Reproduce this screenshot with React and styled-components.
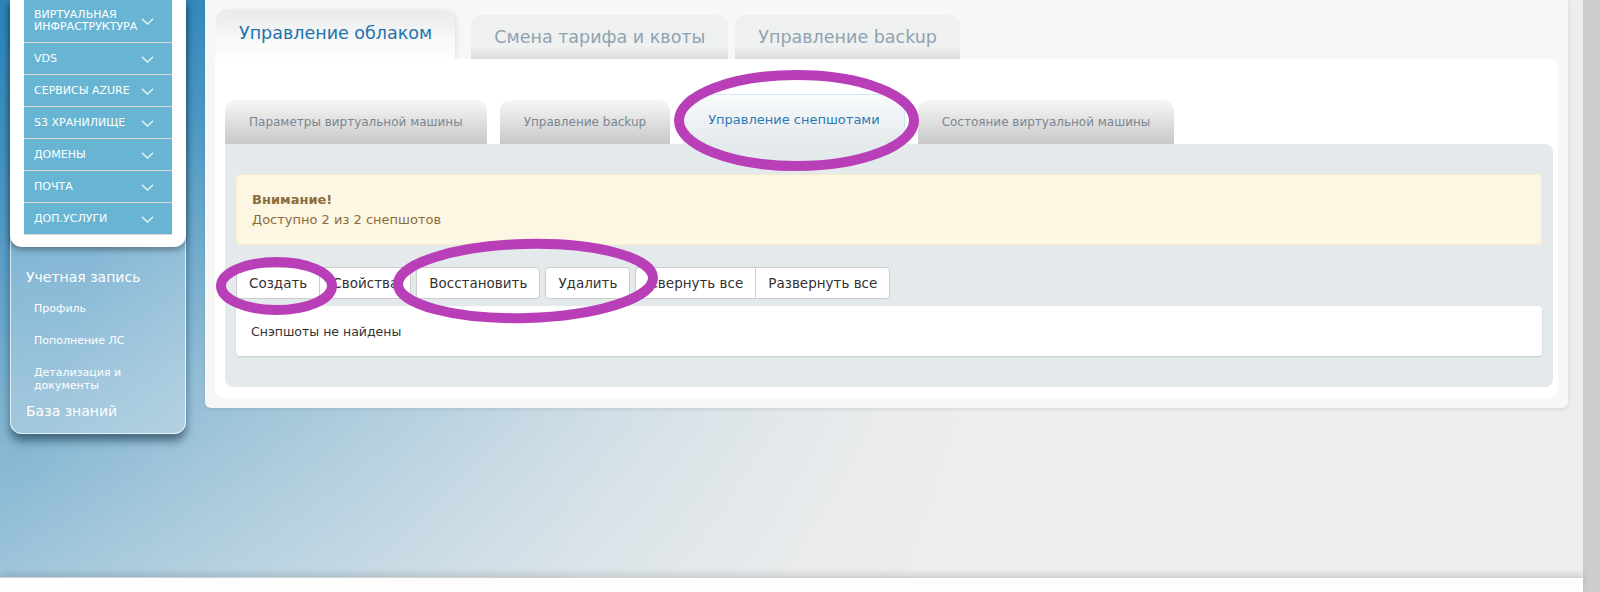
import React from "react";
import styled, { createGlobalStyle } from "styled-components";

const GlobalStyle = createGlobalStyle`
  html, body {
    margin: 0;
    padding: 0;
    width: 1600px;
    height: 592px;
    overflow: hidden;
    background: #ededed;
  }
  #root { height: 592px; }
  * { box-sizing: border-box; }
`;

const FONT = `"DejaVu Sans", Verdana, "Noto Sans", sans-serif`;

const Root = styled.div`
  position: relative;
  display: flex;
  width: 1600px;
  height: 592px;
  overflow: hidden;
  font-family: ${FONT};
`;

const Canvas = styled.div`
  flex: 1;
  min-width: 0;
  display: flex;
  flex-direction: column;
`;

const Stage = styled.div`
  flex: 1;
  min-height: 0;
  display: flex;
  align-items: flex-start;
  background:
    linear-gradient(108deg, rgba(237,237,237,0) 10%, rgba(237,237,237,0.2) 19%, rgba(237,237,237,0.45) 31%, rgba(237,237,237,0.72) 43%, rgba(237,237,237,0.93) 55%, #ededed 62%),
    linear-gradient(172deg, #2a84b8 0%, #4292c1 20%, #7db2d0 50%, #a8cadd 80%, #c9dde8 100%);
`;

const Footer = styled.footer`
  height: 15px;
  flex-shrink: 0;
  background: #fdfdfd;
  border-top: 1px solid #d2d2d2;
  box-shadow: 0 -3px 6px rgba(0, 0, 0, 0.12);
  position: relative;
`;

const ScrollTrack = styled.div`
  width: 17px;
  flex-shrink: 0;
  background: #cdcdcd;
`;

/* ---------- sidebar ---------- */

const Sidebar = styled.aside`
  width: 176px;
  margin: -1px 0 0 10px;
  flex-shrink: 0;
  display: flex;
  flex-direction: column;
  border-radius: 0 0 12px 12px;
  background: rgba(255, 255, 255, 0.25);
  box-shadow: inset 0 0 0 1px rgba(255, 255, 255, 0.75), 0 7px 9px rgba(10, 40, 60, 0.55);
`;

const MenuCard = styled.nav`
  background: #fff;
  padding: 0 14px 12px;
  border-radius: 0 0 12px 12px;
  box-shadow: 0 3px 6px rgba(0, 0, 0, 0.35);
`;

const MenuItem = styled.div`
  position: relative;
  background: #67b5d3;
  color: #fff;
  font-size: 11px;
  line-height: 12px;
  text-transform: uppercase;
  padding: 10px 4px 9px 10px;
  border-bottom: 1px solid #dcd7d7;
`;

const Chevron = styled.svg`
  position: absolute;
  right: 18px;
  top: 50%;
  margin-top: -3px;
`;

const AccountBlock = styled.div`
  display: flex;
  flex-direction: column;
  padding: 20px 0 13px;
  color: #fff;
`;

const AccountTitle = styled.div`
  font-size: 14px;
  line-height: 20px;
  padding-left: 16px;
`;

const AccountLinks = styled.div`
  display: flex;
  flex-direction: column;
  gap: 19px;
  margin: 15px 0 9px;
`;

const AccountLink = styled.div`
  font-size: 11px;
  line-height: 13px;
  padding-left: 24px;
  padding-right: 10px;
`;

/* ---------- main area ---------- */

const Main = styled.main`
  width: 1363px;
  margin-left: 19px;
  flex-shrink: 0;
  background: #f7f7f7;
  padding: 10px;
  border-radius: 0 0 6px 6px;
  box-shadow: 0 1px 4px rgba(0, 0, 0, 0.1);
`;

const TopTabs = styled.div`
  display: flex;
  align-items: flex-end;
  gap: 7px;
  padding-left: 1px;
`;

const TopTab = styled.div`
  height: ${(p) => (p.$active ? "49px" : "44px")};
  margin-right: ${(p) => (p.$active ? "9px" : "0")};
  padding: ${(p) => (p.$active ? "0 23px 4px" : "0 23px")};
  display: flex;
  align-items: center;
  font-size: 17.5px;
  color: ${(p) => (p.$active ? "#1e73ad" : "#8ea3b2")};
  border-radius: 10px 10px 0 0;
  background: ${(p) =>
    p.$active
      ? "linear-gradient(#e8eaeb, #f6f7f7 55%, #ffffff)"
      : "linear-gradient(#eff0f0 0%, #eff0f0 72%, #dcdcdc 100%)"};
  box-shadow: ${(p) => (p.$active ? "2px 0 4px rgba(0,0,0,0.08)" : "none")};
  position: relative;
  z-index: ${(p) => (p.$active ? 1 : 0)};
`;

const CloudPanel = styled.section`
  background: #fff;
  border-radius: 0 8px 8px 8px;
  padding: 35px 5px 11px 10px;
  position: relative;
  z-index: 1;
`;

const SubTabs = styled.div`
  display: flex;
  align-items: flex-end;
  gap: 13px;
`;

const SubTab = styled.div`
  height: ${(p) => (p.$active ? "50px" : "44px")};
  padding: 0 24px;
  display: flex;
  align-items: center;
  font-size: ${(p) => (p.$active ? "13px" : "12px")};
  color: ${(p) => (p.$active ? "#2c7ab3" : "#7b8691")};
  border-radius: 10px 10px 0 0;
  background: ${(p) =>
    p.$active ? "linear-gradient(#f9fbfc, #e4e9ec)" : "linear-gradient(#f7f7f7, #c8c8c8)"};
  border: ${(p) => (p.$active ? "1px solid #d2e8f3" : "none")};
  border-bottom: none;
`;

const SnapshotPane = styled.div`
  background: #e4e9ec;
  border-radius: 0 8px 8px 8px;
  padding: 30px 11px 31px;
  display: flex;
  flex-direction: column;
`;

const Alert = styled.div`
  background: #fdf6e3;
  border: 1px solid #f9ecc9;
  border-radius: 4px;
  padding: 15px 15px 14px;
  color: #8a6d3b;
  font-size: 13px;
  line-height: 20px;
`;

const AlertTitle = styled.div`
  font-weight: bold;
`;

const Toolbar = styled.div`
  display: flex;
  gap: 5px;
  margin: 22px 0 7px;
`;

const ButtonGroup = styled.div`
  display: flex;

  & > button + button {
    margin-left: -1px;
  }
  & > button:not(:first-child) {
    border-top-left-radius: 0;
    border-bottom-left-radius: 0;
  }
  & > button:not(:last-child) {
    border-top-right-radius: 0;
    border-bottom-right-radius: 0;
  }
`;

const Button = styled.button`
  height: 32px;
  padding: 0 12px;
  font-family: ${FONT};
  font-size: 13.5px;
  color: #333;
  background: #fff;
  border: 1px solid #cccccc;
  border-radius: 4px;
  cursor: pointer;
`;

const SnapshotList = styled.div`
  height: 50px;
  display: flex;
  align-items: center;
  padding: 0 15px;
  background: #fff;
  border-radius: 4px;
  box-shadow: 0 1px 2px rgba(0, 0, 0, 0.12);
  font-size: 12.5px;
  color: #333;
`;

/* ---------- marker rings drawn over the page ---------- */

const MarkerLayer = styled.svg`
  position: absolute;
  left: 0;
  top: 0;
  pointer-events: none;
  z-index: 10;
`;

const menu = [
  "Виртуальная инфраструктура",
  "VDS",
  "Сервисы Azure",
  "S3 хранилище",
  "Домены",
  "Почта",
  "Доп.услуги",
];

const ChevronIcon = () => (
  <Chevron width="13" height="7" viewBox="0 0 13 7">
    <polyline points="0.8,0.8 6.5,6 12.2,0.8" fill="none" stroke="#e8f4f9" strokeWidth="1.3" />
  </Chevron>
);

export default function App() {
  return (
    <>
      <GlobalStyle />
      <Root>
        <Canvas>
          <Stage>
            <Sidebar>
              <MenuCard>
                {menu.map((m) => (
                  <MenuItem key={m}>
                    {m}
                    <ChevronIcon />
                  </MenuItem>
                ))}
              </MenuCard>
              <AccountBlock>
                <AccountTitle>Учетная запись</AccountTitle>
                <AccountLinks>
                  <AccountLink>Профиль</AccountLink>
                  <AccountLink>Пополнение ЛС</AccountLink>
                  <AccountLink>Детализация и документы</AccountLink>
                </AccountLinks>
                <AccountTitle>База знаний</AccountTitle>
              </AccountBlock>
            </Sidebar>

            <Main>
              <TopTabs>
                <TopTab $active>Управление облаком</TopTab>
                <TopTab>Смена тарифа и квоты</TopTab>
                <TopTab>Управление backup</TopTab>
              </TopTabs>
              <CloudPanel>
                <SubTabs>
                  <SubTab>Параметры виртуальной машины</SubTab>
                  <SubTab>Управление backup</SubTab>
                  <SubTab $active>Управление снепшотами</SubTab>
                  <SubTab>Состояние виртуальной машины</SubTab>
                </SubTabs>
                <SnapshotPane>
                  <Alert>
                    <AlertTitle>Внимание!</AlertTitle>
                    <div>Доступно 2 из 2 снепшотов</div>
                  </Alert>
                  <Toolbar>
                    <ButtonGroup>
                      <Button>Создать</Button>
                      <Button>Свойства</Button>
                    </ButtonGroup>
                    <ButtonGroup>
                      <Button>Восстановить</Button>
                    </ButtonGroup>
                    <ButtonGroup>
                      <Button>Удалить</Button>
                    </ButtonGroup>
                    <ButtonGroup>
                      <Button>Свернуть все</Button>
                      <Button>Развернуть все</Button>
                    </ButtonGroup>
                  </Toolbar>
                  <SnapshotList>Снэпшоты не найдены</SnapshotList>
                </SnapshotPane>
              </CloudPanel>
            </Main>
          </Stage>
          <Footer />
        </Canvas>
        <ScrollTrack />

        <MarkerLayer width="1600" height="592" viewBox="0 0 1600 592">
          <g fill="none" stroke="#b83fb8" strokeWidth="10">
            <ellipse cx="796.5" cy="120.5" rx="117.5" ry="45.5" />
            <ellipse cx="276.5" cy="286" rx="55.5" ry="24" />
            <ellipse cx="525.5" cy="281" rx="127.5" ry="37" transform="rotate(-1.5 525.5 281)" />
          </g>
        </MarkerLayer>
      </Root>
    </>
  );
}
